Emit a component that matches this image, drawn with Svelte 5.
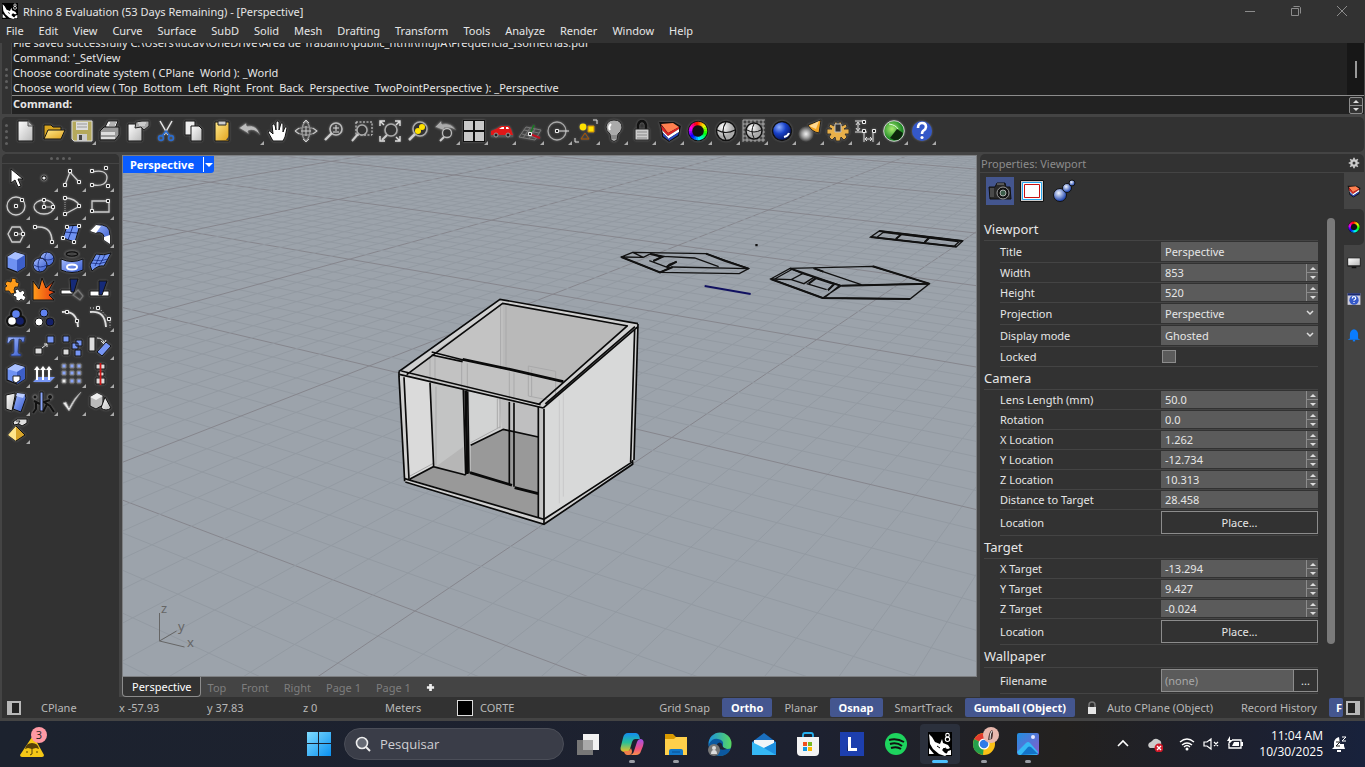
<script lang="ts">
    interface Tool {
        name: string;
        icon: string;
        more?: boolean;
    }
    interface Row {
        label: string;
        kind: string;
        value?: string;
    }
    interface Line {
        x1: number;
        y1: number;
        x2: number;
        y2: number;
        major: boolean;
    }

    const menus = ['File', 'Edit', 'View', 'Curve', 'Surface', 'SubD', 'Solid', 'Mesh', 'Drafting', 'Transform', 'Tools', 'Analyze', 'Render', 'Window', 'Help'];

    const history = [
        'File saved successfully C:\\Users\\lucav\\OneDrive\\Área de Trabalho\\public_html\\mujiA\\Frequência_Isometrias.pdf',
        "Command: '_SetView",
        'Choose coordinate system ( CPlane  World ): _World',
        'Choose world view ( Top  Bottom  Left  Right  Front  Back  Perspective  TwoPointPerspective ): _Perspective',
    ];

    // hue ring made of short arcs
    function ring(r: number, w: number) {
        let out = '';
        for (let k = 0; k < 24; k++) {
            let a = (k * Math.PI) / 12;
            let b = ((k + 1.2) * Math.PI) / 12;
            out += `<path d="M${12 + r * Math.sin(a)} ${12 - r * Math.cos(a)}A${r} ${r} 0 0 1 ${12 + r * Math.sin(b)} ${12 - r * Math.cos(b)}" fill="none" stroke="hsl(${k * 15 + 20} 100% 50%)" stroke-width="${w}"/>`;
        }
        return `<circle cx="12" cy="12" r="10.3" fill="#111"/>${out}`;
    }

    // small square control points
    function pts(...p: number[][]) {
        return p.map(([x, y]) => `<path d="M${x - 1.5} ${y - 1.5}h3v3h-3z" fill="#222" stroke="#eee"/>`).join('');
    }

    const layers = '<path d="M1 3h15l7 4-2 10-10 6-7-5-1-8z" fill="#111"/><path d="M3 5l12-1 6 4-11 6z" fill="#ff8050"/><path d="M3 6l7 8v3l-6-6zM10 14l11-6v2l-11 7z" fill="#d22"/><path d="M4 11l6 6v2l-5-5zM10 17l11-7v3l-11 7z" fill="#fff"/><path d="M5 14l5 5v2l-5-4zM10 20l11-7-1 3-9 6z" fill="#2a4ac0"/>';
    const sphere = '<circle cx="12" cy="12" r="9.5" fill="url(#gray)" stroke="#111" stroke-width="1.5"/>';
    const meridians = '<path d="M12 3q-6 9 0 18M3 11q9 5 18 0" fill="none" stroke="#111" stroke-width="1.2"/>';
    const page = '<path d="M4 2h10l5 5v15H4z" fill="url(#paper)" stroke="#111"/><path d="M14 2v5h5" fill="#bbb" stroke="#555"/>';
    const glass = '<circle cx="14" cy="10" r="6" fill="#444" stroke="#bbb" stroke-width="1.6"/><path d="M10 14l-7 7" stroke="#ccc" stroke-width="2.4"/>';

    const toolbar: Tool[] = [
        { name: 'New', icon: page },
        { name: 'Open', icon: '<path d="M2 20V6h7l2 2h8v4" fill="#d8a520" stroke="#111"/><path d="M2 20l4-9h17l-4 9z" fill="url(#gold)" stroke="#111"/>' },
        { name: 'Save', icon: '<path d="M2 2h20v20H4l-2-2z" fill="#b5a95c" stroke="#ddd"/><path d="M6 3h12v8H6z" fill="#ddd"/><path d="M7 15h10v7H7z" fill="#ccc"/><path d="M9 16h3v5H9z" fill="#444"/><path d="M7 5h10M7 8h10" stroke="#999"/>', more: true },
        { name: 'Print', icon: '<path d="M7 8l3-6h10l-3 8z" fill="#eee" stroke="#111"/><path d="M2 12l4-4h15v8l-4 5H2z" fill="#999" stroke="#111"/><path d="M3 13h14v3H3zM3 18h14v2H3z" fill="#ddd"/><path d="M12 4h6M11 6h6" stroke="#777"/>' },
        { name: 'Document properties', icon: '<path d="M2 5h14v17H2z" fill="url(#paper)" stroke="#111"/><path d="M10 3l6-1h7v5l-5 4-3-3-6 1z" fill="#aaa" stroke="#222"/><path d="M12 4l8 0M13 6h6" stroke="#eee"/>' },
        { name: 'Cut', icon: '<path d="M6 2l8 14M18 2l-8 14" stroke="#e8e8e8" stroke-width="1.5"/><circle cx="7" cy="19" r="2.4" fill="none" stroke="#2a6cd0" stroke-width="1.6"/><circle cx="17" cy="19" r="2.4" fill="none" stroke="#2a6cd0" stroke-width="1.6"/><path d="M8 17l4-5 4 5" fill="none" stroke="#2a6cd0" stroke-width="1.6"/>' },
        { name: 'Copy', icon: '<path d="M3 2h10v14H3z" fill="#eee" stroke="#111"/><path d="M9 7h8l3 3v12H9z" fill="url(#paper)" stroke="#111"/>' },
        { name: 'Paste', icon: '<path d="M5 3h14v19H5z" fill="url(#gold)" stroke="#111"/><path d="M8 2h8v4H8z" fill="#ccc" stroke="#222"/><path d="M19 17l-3 4h3z" fill="#444"/>' },
        { name: 'Undo', icon: '<path d="M1 9l7-5 1 3q10-2 13 9-6-7-12-4l1 3z" fill="#bbb" stroke="#555" stroke-width=".6"/>', more: true },
        { name: 'Pan', icon: '<path d="M7 22l-5-9q1-2 3 0l2 2L6 6q1-2 3 0l1 5V3q2-2 3 0v8l2-7q2-1 2 1v8l2-5q2-1 2 1l-2 9-2 4z" fill="#fff" stroke="#111" stroke-width="1"/>' },
        { name: 'Rotate view', icon: '<path d="M12 2q-4 3-4 10t4 10q4-4 4-10T12 2M1 12q5-4 11-4t11 4q-5 4-11 4T1 12" fill="none" stroke="#999" stroke-width="1.2"/><path d="M9 4l3-3 3 3M9 20l3 3 3-3M5 9l-4 3 4 3M19 9l4 3-4 3M12 7v10M7 12h10" fill="none" stroke="#ccc"/>' },
        { name: 'Zoom', icon: glass + '<path d="M11 9h6M14 6v6M11 13h6" stroke="#ddd"/>' },
        { name: 'Zoom window', icon: '<path d="M6 3h16v13H6z" fill="none" stroke="#ddd" stroke-dasharray="2 1.5"/><circle cx="12" cy="11" r="5" fill="#333" stroke="#aaa" stroke-width="1.5"/><path d="M8 15l-6 7" stroke="#ccc" stroke-width="2"/>' },
        { name: 'Zoom extents', icon: '<circle cx="13" cy="11" r="6" fill="#333" stroke="#aaa" stroke-width="1.6"/><path d="M9 16l-5 5" stroke="#ccc" stroke-width="2"/><path d="M2 7V2h5M17 2h5v5M2 17v5h5M22 17v5h-5M2 2l4 4M22 2l-4 4M22 22l-4-4" fill="none" stroke="#ddd" stroke-width="1.4"/>' },
        { name: 'Zoom selected', icon: '<circle cx="14" cy="10" r="7" fill="#333" stroke="#aaa" stroke-width="1.6"/><path d="M9 15l-6 6" stroke="#ccc" stroke-width="2.5"/><circle cx="12" cy="12" r="3" fill="#ffe100"/><circle cx="16" cy="8" r="3" fill="#ffe100"/>' },
        { name: 'Undo view', icon: '<path d="M1 8l6-6 1 3q9-2 14 6-6-3-12-2l1 3z" fill="#aaa" stroke="#555" stroke-width=".6"/><circle cx="13" cy="14" r="4.5" fill="#333" stroke="#bbb" stroke-width="1.3"/><path d="M10 18l-4 4" stroke="#ccc" stroke-width="2"/>', more: true },
        { name: 'Four views', icon: '<path d="M1 1h22v22H1z" fill="#111"/><path d="M2 2h9v9H2zM13 2h9v9h-9zM2 13h9v9H2zM13 13h9v9h-9z" fill="#c8c8c8"/>', more: true },
        { name: 'Named views', icon: '<path d="M1 17h22" stroke="#555" stroke-width="2"/><path d="M1 16v-4l5-2 5-3h8l2 3 2 6z" fill="#e01818"/><path d="M9 10l3-2h2v2zM16 8h2l1 2h-3z" fill="#fff"/><circle cx="6" cy="16" r="2" fill="#222" stroke="#999"/><circle cx="18" cy="16" r="2" fill="#222" stroke="#999"/>', more: true },
        { name: 'Set CPlane', icon: '<path d="M1 18l7-10 15 3-6 10zM4 15l15 4M6 11l15 3M5 19l7-10M11 20l6-10" fill="none" stroke="#777"/><path d="M12 15l10 4" stroke="#c01020" stroke-width="2"/><path d="M12 15l4-9" stroke="#167a20" stroke-width="1.6"/>' + pts([12, 15]), more: true },
        { name: 'Object snap', icon: '<circle cx="11" cy="12" r="9" fill="none" stroke="#aaa" stroke-width="1.3"/><path d="M12 12h11" stroke="#ddd"/>' + pts([11, 12]), more: true },
        { name: 'Select', icon: '<circle cx="9" cy="8" r="3.4" fill="#ffe100"/><path d="M14 7h6v6h-6z" fill="#ffe100" stroke="#c80"/><path d="M11 14l4 6H7z" fill="none" stroke="#a50"/><path d="M19 1h4v4M1 19v4h4" fill="none" stroke="#ddd"/>', more: true },
        { name: 'Hide', icon: '<path d="M12 1q8 0 8 8-1 4-4 6l-1 6q-3 3-6 0l-1-6q-4-3-4-7 1-7 8-7z" fill="#aaa" stroke="#222"/><path d="M9 5q-3 3-1 6" stroke="#fff" fill="none" stroke-width="2"/><path d="M9 17h6M9 19h6" stroke="#666"/>', more: true },
        { name: 'Lock', icon: '<path d="M8 11V6q1-4 4-4t4 4v5" fill="none" stroke="#111" stroke-width="2.5"/><path d="M5 10h14v11H5z" fill="#ccc" stroke="#222"/><path d="M7 13h10M7 16h10M7 19h10" stroke="#888"/>', more: true },
        { name: 'Layers', icon: layers, more: true },
        { name: 'Object properties', icon: ring(7.5, 3.4), more: true },
        { name: 'Shade', icon: sphere + meridians, more: true },
        { name: 'Wireframe', icon: '<path d="M1 1v22M5 1v22M9 1v22M13 1v22M17 1v22M21 1v22M1 1h22M1 5h22M1 9h22M1 13h22M1 17h22M1 21h22" stroke="#bbb" stroke-width=".8"/>' + sphere.replace('9.5', '8') + '<path d="M12 5q-4 7 0 14M5 11q7 4 14 0" fill="none" stroke="#111"/>', more: true },
        { name: 'Render', icon: '<circle cx="12" cy="12" r="9.5" fill="url(#ball)" stroke="#111" stroke-width="1.4"/><path d="M14 18q4-1 5-4" stroke="#fff" fill="none" stroke-width="2"/>', more: true },
        { name: 'Lights', icon: '<ellipse cx="8" cy="15" rx="8" ry="8" fill="url(#glow)"/><path d="M10 6l13-5-2 13q-7-1-11-8z" fill="#f5a623" stroke="#222"/><path d="M11 7l10-5-3 8z" fill="#ffd890"/>', more: true },
        { name: 'Options', icon: '<path d="M9 3h2v4h2V3h2l1 4 4-2 1 3-3 2h5v5h-4l2 3-3 3-3-3-1 4h-4l-1-4-3 3-3-3 2-3H1v-5h5L3 8l1-3 4 2z" fill="#e8b04a" stroke="#222" stroke-width=".8"/><path d="M9 5h6v8H9z" fill="#333" stroke="#bbb"/>', more: true },
        { name: 'Dimension', icon: '<path d="M1 2h9M1 13h12M4 4v7M10 14v9M19 14v9M11 20h7" stroke="#ddd" fill="none"/><path d="M2 6l2-3 2 3M2 9l2 3 2-3M13 18l-2 2 2 2M16 18l2 2-2 2" fill="none" stroke="#ddd"/>' + pts([10, 3], [10, 12], [20, 12]), more: true },
        { name: 'Grasshopper', icon: '<circle cx="12" cy="12" r="10.3" fill="url(#green)" stroke="#ccc"/><path d="M8 19l7-9 6 4q-2 8-9 7z" fill="#0c250c"/><path d="M7 5q7 1 9 5" stroke="#dfd" fill="none"/>', more: true },
        { name: 'Help', icon: '<circle cx="12" cy="12" r="10" fill="#3458c8"/><path d="M8 9q0-5 4-5t4 4q0 2-3 4-1 1-1 3" stroke="#fff" stroke-width="2.6" fill="none"/><circle cx="12" cy="18.500" r="1.600" fill="#fff"/>', more: true },
    ];

    const cube = '<path d="M3 7l8-5 10 3v12l-8 5-10-4z" fill="#6f92f2" stroke="#111" stroke-width="1.2"/><path d="M3 7l8-5 10 3-8 5z" fill="#a9c0ff"/><path d="M13 10l8-5v12l-8 5z" fill="#3d5fc8"/>';

    const sideTools: Tool[] = [
        { name: 'Pointer', icon: '<path d="M7 3v14l4-3 3 7 3-1-3-7h5z" fill="#fff" stroke="#111"/>' },
        { name: 'Point', icon: '<circle cx="12" cy="12" r="3" fill="#111" stroke="#666"/><circle cx="12" cy="12" r="1.600" fill="#eee"/>', more: true },
        { name: 'Polyline', icon: '<path d="M5 19l5-13 9 10" stroke="#ccc" fill="none" stroke-width="1.3"/>' + pts([5, 19], [10, 5], [19, 16]), more: true },
        { name: 'Curve', icon: '<path d="M4 6q14-3 15 5 0 10-14 8" stroke="#ccc" fill="none" stroke-width="1.3"/>' + pts([4, 5], [18, 2], [20, 20], [4, 19]), more: true },
        { name: 'Circle', icon: '<circle cx="12" cy="12" r="9" stroke="#ccc" fill="none" stroke-width="1.3"/>' + pts([12, 12], [18, 6]), more: true },
        { name: 'Ellipse', icon: '<ellipse cx="12" cy="13" rx="10" ry="7" stroke="#ccc" fill="none" stroke-width="1.3"/><path d="M12 6v7h9" stroke="#ccc" fill="none"/>' + pts([12, 6], [12, 13], [21, 13]), more: true },
        { name: 'Arc', icon: '<path d="M5 4q10 0 15 8L5 20" stroke="#ccc" fill="none" stroke-width="1.3"/><path d="M5 4v16" stroke="#999" stroke-dasharray="1 1"/>' + pts([5, 4], [19, 12], [5, 20]), more: true },
        { name: 'Rectangle', icon: '<path d="M4 7h17v11H4z" stroke="#ccc" fill="none" stroke-width="1.3"/>' + pts([20, 7], [4, 17]), more: true },
        { name: 'Polygon', icon: '<path d="M8 5h8l4 7-4 8H8l-4-8z" stroke="#ccc" fill="none" stroke-width="1.3"/><path d="M12 12h7" stroke="#ccc"/>' + pts([12, 12], [19, 12]), more: true },
        { name: 'Fillet', icon: '<path d="M3 5h4q13 0 13 15" stroke="#ccc" fill="none" stroke-width="1.6"/>' + pts([3, 5], [20, 20]), more: true },
        { name: 'Surface from points', icon: '<path d="M7 4l13-1-5 17-12-4z" fill="#6f92f2" stroke="#111"/><path d="M13 4l-5 14M5 10l12 1" stroke="#1a2f80"/>' + pts([7, 5], [19, 4], [3, 16], [14, 20]), more: true },
        { name: 'Loft', icon: '<path d="M2 9l6-6q14-2 14 10v9l-6-4q1-9-8-7z" fill="url(#blue)" stroke="#111"/><path d="M2 9l6-6 5 1-5 7zM16 15l6-2v9l-6-4z" fill="#fff"/>', more: true },
        { name: 'Box', icon: cube, more: true },
        { name: 'Boolean union', icon: '<circle cx="15" cy="9" r="7" fill="url(#blue)" stroke="#111"/><circle cx="8" cy="15" r="7" fill="url(#blue)" stroke="#111"/><path d="M8 8q-4 7 0 14M2 15q6 4 13 0M15 2q-3 4-2 9M10 8q6 4 12 0" fill="none" stroke="#14287a" stroke-width=".8"/>', more: true },
        { name: 'Revolve', icon: '<ellipse cx="12" cy="4" rx="6" ry="2.500" fill="none" stroke="#111" stroke-width="2"/><ellipse cx="12" cy="4" rx="7" ry="3.300" fill="none" stroke="#777" stroke-width=".6"/><path d="M1 9q11 5 22 0v11q-11 5-22 0z" fill="url(#blue)" stroke="#111"/><ellipse cx="12" cy="17" rx="5" ry="2.500" fill="none" stroke="#fff" stroke-width="2"/>', more: true },
        { name: 'Patch', icon: '<path d="M2 15l6-11q8 2 15-1l-7 13q-6-1-12 5z" fill="#6f92f2" stroke="#111"/><path d="M12 5L7 16M17 5l-6 11M5 10q8 2 15-1M3 13q8 2 15-1" stroke="#14287a" fill="none" stroke-width=".8"/>', more: true },
        { name: 'Explode puzzle', icon: '<path d="M1 6l2-3 4 1 1-4 4 1 0 3 3 1-1 4-3 0-1 3 1 3-4 1-2-3-4 0 0-4 2-1z" fill="#ff9c1a" stroke="#111" stroke-width=".8"/><path d="M11 12l3-1 2 3 3-2 2 3-2 2 3 2-2 4-3-2-2 2-3-1 0-3-3-1 1-3 2 0z" fill="#fff" stroke="#111" stroke-width=".8"/>', more: true },
        { name: 'Explode', icon: '<path d="M1 3l6 8 3-11 4 10 8-7-5 9 6 2-6 3 5 5H1z" fill="url(#fire)" stroke="#111"/>' },
        { name: 'Trim', icon: '<path d="M1 12h12v4H1z" fill="#fff" stroke="#111"/><path d="M10 1h8l-4 13h-3z" fill="#152a78" stroke="#111"/><path d="M13 17l5-5 5 6-3 4z" fill="none" stroke="#777" stroke-width="1.2"/>' },
        { name: 'Split', icon: '<path d="M2 13h19v5H2z" fill="#fff" stroke="#111"/><path d="M11 3h8l-5 14h-3z" fill="#152a78" stroke="#111"/>' },
        { name: 'Group', icon: '<circle cx="12" cy="8" r="6" fill="#111"/><circle cx="8" cy="15" r="6" fill="#111"/><circle cx="16" cy="15" r="6" fill="#111"/><circle cx="12" cy="8" r="3.800" fill="#5f82f0"/><circle cx="8" cy="15" r="3.800" fill="#fff"/><circle cx="16" cy="15" r="3.800" fill="#142068"/>', more: true },
        { name: 'Ungroup', icon: '<circle cx="12" cy="7" r="4" fill="#5f82f0" stroke="#111"/><circle cx="7" cy="16" r="4" fill="#fff" stroke="#111"/><circle cx="18" cy="16" r="4" fill="#142068" stroke="#111"/>' },
        { name: 'Edit points', icon: '<path d="M2 6q15-2 16 15" stroke="#ddd" fill="none" stroke-width="1.800"/>' + pts([7, 6], [17, 15]) },
        { name: 'Control points', icon: '<path d="M2 6q15-2 16 15" stroke="#ddd" fill="none" stroke-width="1.800"/><path d="M2 2h9l11 12v8" stroke="#ddd" fill="none" stroke-dasharray="1 2"/>' + pts([10, 2], [21, 13]), more: true },
        { name: 'Text', icon: '<path d="M4 3h17l-1 5h-2q0-3-3-3l-1 13q0 2 3 2v2H7v-2q3 0 3-2V5Q6 5 5 9H3z" fill="url(#blue)" stroke="#1a2c66" stroke-width=".7"/>' },
        { name: 'Move', icon: '<path d="M3 14h7v6H3z" fill="#ddd" stroke="#111"/><path d="M15 2h7v7h-7z" fill="#7796f4" stroke="#111"/><path d="M10 14l5-4M12 10h3v3" stroke="#ddd" fill="none"/>', more: true },
        { name: 'Copy object', icon: '<path d="M3 2h6v6H3zM16 6h6v6h-6zM12 9h6v6h-6zM15 16h6v6h-6z" fill="#7796f4" stroke="#111"/><path d="M3 15h6v6H3z" fill="#ddd" stroke="#111"/>' },
        { name: 'Rotate', icon: '<path d="M1 3h6v14H1z" fill="#ddd" stroke="#111"/><path d="M9 4q6 0 7 5M13 7l3 3 2-4" fill="none" stroke="#ddd"/><path d="M9 18l9-10 5 4-9 10z" fill="#7796f4" stroke="#111"/>', more: true },
        { name: 'Solid tools', icon: cube + '<path d="M9 14h7v4l-4 3-3-2z" fill="#fff" stroke="#222"/>', more: true },
        { name: 'Extrude', icon: '<path d="M1 20l5-5h17l-5 5z" fill="#7796f4"/><path d="M5 18V6M11 18V6M17 18V6" stroke="#fff" stroke-width="2"/><path d="M2 8l3-4 3 4zM8 8l3-4 3 4zM14 8l3-4 3 4z" fill="#fff"/>', more: true },
        { name: 'Array', icon: '<path d="M2 2h4v4H2zM10 2h4v4h-4zM17 2h4v4h-4zM2 9h4v4H2zM10 9h4v4h-4zM17 9h4v4h-4zM10 17h4v4h-4zM17 17h4v4h-4z" fill="#8ba5f8" stroke="#777"/><path d="M2 17h4v4H2z" fill="#eee" stroke="#777"/>', more: true },
        { name: 'Align', icon: '<path d="M8 2h9v5H8zM10 10h6v4h-6zM8 16h9v6H8z" fill="#ddd" stroke="#111"/><path d="M12.500 1v22" stroke="#d01818" stroke-width="1.800"/>', more: true },
        { name: 'Bend', icon: '<path d="M2 5l9-2v3l-3 15-6-2z" fill="url(#paper)" stroke="#111"/><path d="M13 3l8 1 1 4-5 14-8-3z" fill="url(#blue)" stroke="#111"/><path d="M13 3l8 1-2 4-7-2z" fill="#bccdff"/>', more: true },
        { name: 'Mirror', icon: '<circle cx="3" cy="7" r="2" fill="#111" stroke="#666"/><circle cx="18" cy="7" r="2.500" fill="#111" stroke="#666"/><path d="M2 11l6 3M4 12v7l-3 4M18 10l-6 2 6 4 4 6M15 14l-4 8" stroke="#111" stroke-width="2" fill="none"/><path d="M8 2h3v19H8z" fill="#8ba5f8" stroke="#111"/>', more: true },
        { name: 'Check', icon: '<path d="M3 13l3-1 3 6q5-10 12-16Q14 11 9 21z" fill="#eee" stroke="#999" stroke-width=".7"/>', more: true },
        { name: 'Mesh', icon: '<path d="M2 7l7-4 6 3v9l-7 4-6-3z" fill="#bbb" stroke="#111"/><path d="M2 7l7-4 6 3-7 4z" fill="#eee"/><path d="M17 7l6 11q-5 4-10 0z" fill="url(#paper)" stroke="#111"/>', more: true },
        { name: 'Render tools', icon: '<path d="M12 8l-8 9 8 6 9-6z" fill="#d8a52a" stroke="#111"/><path d="M12 8l-8 9 8 6z" fill="#ffe58a"/><path d="M9 4l4-3h10v4l-5 3-3-2-5 1z" fill="#ddd" stroke="#111"/><path d="M12 3h4l-2 3" stroke="#222" fill="none"/>', more: true },
    ];

    // ground grid: origin plus the two vanishing points, in scene units
    const origin = { x: 415, y: 611 };
    const vanishX = { x: 1337, y: -12 };
    const vanishY = { x: -1228, y: -12 };

    function project(i: number, j: number) {
        let a = 0.386 * i;
        let b = 0.2625 * j;
        let w = 1 + a + b;
        return {
            x: (origin.x + a * vanishX.x + b * vanishY.x) / w,
            y: (origin.y + a * vanishX.y + b * vanishY.y) / w,
        };
    }

    // ten minor cells per major one
    function buildGrid() {
        let lines: Line[] = [];
        for (let k = -11; k <= 110; k++) {
            let ends = [[project(-0.8, k / 10), project(12, k / 10)]];
            if (k > -8 && k < 80) ends.push([project(k / 10, -1.2), project(k / 10, 14)]);
            for (const [p, q] of ends) lines.push({ x1: p.x, y1: p.y, x2: q.x, y2: q.y, major: k % 10 == 0 });
        }
        return lines;
    }

    const grid = buildGrid();

    const sections: { title: string; rows: Row[] }[] = [
        {
            title: 'Viewport',
            rows: [
                { label: 'Title', kind: 'text', value: 'Perspective' },
                { label: 'Width', kind: 'number', value: '853' },
                { label: 'Height', kind: 'number', value: '520' },
                { label: 'Projection', kind: 'select', value: 'Perspective' },
                { label: 'Display mode', kind: 'select', value: 'Ghosted' },
                { label: 'Locked', kind: 'check' },
            ],
        },
        {
            title: 'Camera',
            rows: [
                { label: 'Lens Length (mm)', kind: 'number', value: '50.0' },
                { label: 'Rotation', kind: 'number', value: '0.0' },
                { label: 'X Location', kind: 'number', value: '1.262' },
                { label: 'Y Location', kind: 'number', value: '-12.734' },
                { label: 'Z Location', kind: 'number', value: '10.313' },
                { label: 'Distance to Target', kind: 'plain', value: '28.458' },
                { label: 'Location', kind: 'button', value: 'Place...' },
            ],
        },
        {
            title: 'Target',
            rows: [
                { label: 'X Target', kind: 'number', value: '-13.294' },
                { label: 'Y Target', kind: 'number', value: '9.427' },
                { label: 'Z Target', kind: 'number', value: '-0.024' },
                { label: 'Location', kind: 'button', value: 'Place...' },
            ],
        },
        { title: 'Wallpaper', rows: [{ label: 'Filename', kind: 'file', value: '(none)' }] },
    ];

    const rhino = '<path d="M0 0h24v24H0z" fill="#000"/><path d="M1 2l3 3 3 5 5 2 2-5 1 4 5 2 2 3-2 1-4-1-2 2 3 3 3 1-3 2-6-2-6-5-3-5zM1 16l5 6H1zM20 19l3-1v5h-5z" fill="#fff"/><path d="M9 14l3 2M15 17l3-1" stroke="#000"/>';
    const eight = '<circle cx="19.500" cy="3.200" r="1.800" fill="none" stroke="#fff" stroke-width="1.100"/><circle cx="19.500" cy="7.300" r="2.200" fill="none" stroke="#fff" stroke-width="1.100"/>';
    const monitor = '<path d="M1 3h22v15H1z" fill="#111"/><path d="M2 4h20v12H2z" fill="url(#paper)"/><path d="M8 18h8v3H8z" fill="#111"/>';
    const helpBox = '<path d="M1 2h22v20H1z" fill="#ccd" /><path d="M1 2h22v4H1z" fill="#1b2a70"/><circle cx="12" cy="14" r="8" fill="#3458c8"/><path d="M9 11q0-3 3-3t3 3q0 1-3 3v1M12 17v2" stroke="#fff" stroke-width="2" fill="none"/>';
    const bell = '<path d="M12 2q6 1 7 8v8l4 2H1l4-2v-8q1-7 7-8z" fill="#0a7cff"/><path d="M10 20h4v3h-4z" fill="#0a7cff"/>';
    const panelTabs: Tool[] = [
        { name: 'Layers panel', icon: layers },
        { name: 'Properties panel', icon: ring(7.5, 4) },
        { name: 'Display panel', icon: monitor },
        { name: 'Help panel', icon: helpBox },
        { name: 'Notifications panel', icon: bell },
    ];

    const propertyPages: Tool[] = [
        { name: 'Camera', icon: '<path d="M1 8h6l2-4h8l1 4h4l1 12H2z" fill="#292929" stroke="#111"/><path d="M9 5h7M3 10v8" stroke="#888"/><path d="M2 9h4v9H2z" fill="#4a4a4a"/><circle cx="15" cy="14" r="6" fill="#111" stroke="#999"/><circle cx="15" cy="14" r="3" fill="#3b5c48" stroke="#ccc" stroke-width=".8"/>' },
        { name: 'Frame', icon: '<path d="M.5 1.500h23v21H.5z" fill="#ccc" stroke="#111"/><path d="M2.500 3.500h19v17h-19z" fill="#fff" stroke="#26a8f0"/><path d="M4.500 5.500h15v13h-15z" fill="#fff" stroke="#c81010"/>' },
        { name: 'Material', icon: '<circle cx="8" cy="16" r="6.500" fill="url(#ball2)" stroke="#111"/><circle cx="15" cy="9" r="4.500" fill="url(#ball2)" stroke="#111"/><circle cx="20" cy="4" r="3" fill="url(#ball2)" stroke="#111"/>' },
    ];

    const toggles = [
        { label: 'Grid Snap', on: false },
        { label: 'Ortho', on: true },
        { label: 'Planar', on: false },
        { label: 'Osnap', on: true },
        { label: 'SmartTrack', on: false },
        { label: 'Gumball (Object)', on: true },
    ];

    const apps = [
        { name: 'Task view', state: '', icon: '<path d="M7 2h16v16H7z" fill="#f2f2f2"/><path d="M1 8h16v15H1z" fill="#777"/><path d="M7 8h10v10H7z" fill="#aaa"/>' },
        { name: 'Copilot', state: 'open', icon: '<path d="M8 1h8q3 0 4 6h-5q-2 0-3 3l-2 7q-1 3-4 3H4q-5-1-3-6l2-8q1-5 5-5z" fill="url(#cop1)"/><path d="M16 23H9q4 0 5-4l3-9q1-3 4-3 4 1 2 7l-2 5q-1 4-5 4z" fill="url(#cop2)"/><path d="M7 23q-3-1-3-4h4q2 0 3-3l1 3q0 4-3 4z" fill="#f0804a"/>' },
        { name: 'File Explorer', state: 'open', icon: '<path d="M1 2h8l3 3h11v6H1z" fill="#d99a00"/><path d="M1 7h9l2-2h11v18H1z" fill="#ffd04a"/><path d="M5 23v-4q0-2 2-2h10q2 0 2 2v4z" fill="#1177c8"/><path d="M8 20h8" stroke="#0a4f90"/>' },
        { name: 'Edge', state: '', icon: '<circle cx="12" cy="12" r="11.500" fill="url(#edge)"/><path d="M1 12q3-6 9-5 6 1 5 6-1 4 4 4 3 0 4-1-3 8-11 8-8-1-11-7z" fill="#0b58a0"/><path d="M9 12q3-3 5 0 0 4 5 5-6 2-9-1z" fill="#1d2333"/><circle cx="6" cy="18" r="6" fill="#777"/><circle cx="6" cy="16" r="2" fill="#ddd"/><path d="M3 22q0-4 3-4t3 4z" fill="#ddd"/>' },
        { name: 'Mail', state: '', icon: '<path d="M0 10L12 1l12 9v13H0z" fill="#1a6fc0"/><path d="M2 8h20v8H2z" fill="#f2f5f8"/><path d="M0 10l12 6 12-6v13H0z" fill="#35b8f5"/><path d="M24 10v13L12 16z" fill="#1d8fe0"/>' },
        { name: 'Store', state: '', icon: '<path d="M7 6V3q0-2 2-2h6q2 0 2 2v3" fill="none" stroke="#25b0ef" stroke-width="1.800"/><path d="M1 5h22v15q0 4-4 4H5q-4 0-4-4z" fill="#f3f3f3"/><path d="M7 10h4v4H7z" fill="#f05020"/><path d="M12 10h4v4h-4z" fill="#78b820"/><path d="M7 15h4v4H7z" fill="#1296e0"/><path d="M12 15h4v4h-4z" fill="#fbb800"/>' },
        { name: 'L', state: '', icon: '<path d="M0 0h24v24H0z" fill="#1d3fae"/><path d="M7 19l2-14v11h8v3z" fill="#102050"/><path d="M8 5h3v11h6v3H8z" fill="#fff"/>' },
        { name: 'Spotify', state: '', icon: '<circle cx="12" cy="12" r="11" fill="#1ed45e"/><path d="M5 8q8-2 15 2M6 12q7-2 12 2M7 16q6-2 10 1" stroke="#111" stroke-width="2" fill="none"/>' },
        { name: 'Rhino', state: 'current', icon: rhino + eight },
        { name: 'Chrome', state: 'open', icon: '<circle cx="12" cy="12" r="11" fill="#fbc116"/><path d="M12 12L2 7Q6 1 12 1t10 6z" fill="#e33b2e"/><path d="M12 12l-1 11Q-2 20 2 7z" fill="#25a04b"/><circle cx="12" cy="12" r="5.500" fill="#fff"/><circle cx="12" cy="12" r="4.300" fill="#2f7be8"/><circle cx="19" cy="3" r="8" fill="#e8b8ae"/><path d="M16 8q1-9 4-10 2 2 0 9z" fill="#4a3434"/><path d="M18 7q0-6 2-8" stroke="#eee" fill="none"/>' },
        { name: 'Photos', state: 'open', icon: '<path d="M3 1h18q2 0 2 2v18q0 2-2 2H3q-2 0-2-2V3q0-2 2-2z" fill="url(#photo)"/><path d="M1 20l9-9q2-2 4 0l8 9-1 3H3z" fill="#35b9f5"/><path d="M5 23l7-8q1-1 3 0l7 7z" fill="#1473c8"/><circle cx="17" cy="5" r="2" fill="#e8e8ff"/>' },
    ];
</script>

<svg class="defs" aria-hidden="true">
    <defs>
        <linearGradient id="paper" x2="1" y2="1"><stop stop-color="#fff" /><stop offset="1" stop-color="#b8b8b8" /></linearGradient>
        <linearGradient id="gold" x2="1" y2="1"><stop stop-color="#ffe98c" /><stop offset="1" stop-color="#e0a21c" /></linearGradient>
        <linearGradient id="blue" x2="1" y2="1"><stop stop-color="#a5bcff" /><stop offset="1" stop-color="#3358cc" /></linearGradient>
        <linearGradient id="fire" x2="1" y2="0"><stop stop-color="#ff9c1a" /><stop offset="1" stop-color="#e83a10" /></linearGradient>
        <radialGradient id="gray" cx=".35" cy=".3"><stop stop-color="#fff" /><stop offset="1" stop-color="#aaa" /></radialGradient>
        <radialGradient id="ball" cx=".35" cy=".3" r=".7"><stop stop-color="#8fb0ff" /><stop offset=".5" stop-color="#1740c8" /><stop offset="1" stop-color="#081760" /></radialGradient>
        <radialGradient id="ball2" cx=".4" cy=".35" r=".6"><stop stop-color="#f0f5ff" /><stop offset="1" stop-color="#2348b0" /></radialGradient>
        <radialGradient id="green" cx=".4" cy=".4"><stop stop-color="#a8ec70" /><stop offset="1" stop-color="#1f8a26" /></radialGradient>
        <radialGradient id="glow"><stop stop-color="#eee" /><stop offset="1" stop-color="#eee" stop-opacity="0" /></radialGradient>
        <linearGradient id="cop1" y2="1" x2="0"><stop stop-color="#128cf0" /><stop offset=".5" stop-color="#28c098" /><stop offset="1" stop-color="#f0c020" /></linearGradient>
        <linearGradient id="cop2" y2="1" x2="0"><stop stop-color="#a050e8" /><stop offset=".6" stop-color="#f05080" /><stop offset="1" stop-color="#f8904a" /></linearGradient>
        <linearGradient id="edge" x2="1" y2="0"><stop stop-color="#1b90e0" /><stop offset="1" stop-color="#58d860" /></linearGradient>
        <linearGradient id="photo" x2="1" y2="1"><stop stop-color="#1f8fe0" /><stop offset="1" stop-color="#8a5acb" /></linearGradient>
        <linearGradient id="win" x2="1" y2="1"><stop stop-color="#80dcff" /><stop offset="1" stop-color="#0a90f0" /></linearGradient>
    </defs>
</svg>

<div class="desktop">
    <header class="titlebar">
        <svg class="logo" viewBox="0 0 24 24">{@html rhino + eight}</svg>
        <h1>Rhino 8 Evaluation (53 Days Remaining) - [Perspective]</h1>
        <div class="window-buttons">
            <button aria-label="Minimize"><svg viewBox="0 0 12 12"><path d="M1 6.500h10" /></svg></button>
            <button aria-label="Restore"><svg viewBox="0 0 12 12"><path d="M1.500 3.500h7v7h-7zM3.500 1.500h6l1 1v6" /></svg></button>
            <button aria-label="Close"><svg viewBox="0 0 12 12"><path d="M1 1l10 10M11 1L1 11" /></svg></button>
        </div>
    </header>

    <nav class="menu">
        {#each menus as item}
            <button>{item}</button>
        {/each}
    </nav>

    <section class="command">
        <div class="grip"><i></i><i></i><i></i><i></i></div>
        <div class="command-body">
            <div class="history">
                <div class="lines">
                    {#each history as line}
                        <p>{line}</p>
                    {/each}
                </div>
                <div class="history-scroll"><i></i></div>
            </div>
            <div class="prompt">
                <label for="prompt">Command:</label>
                <input id="prompt" type="text" />
                <div class="stepper framed">
                    <button aria-label="Previous command"><i class="up"></i></button>
                    <button aria-label="Next command"><i class="down"></i></button>
                </div>
            </div>
        </div>
    </section>

    <section class="toolbar">
        <div class="grip"><i></i><i></i><i></i><i></i></div>
        <div class="tools">
            {#each toolbar as tool}
                <button class="tool" class:more={tool.more} aria-label={tool.name}>
                    <svg viewBox="0 0 24 24">{@html tool.icon}</svg>
                </button>
            {/each}
        </div>
    </section>

    <main>
        <aside class="side">
            <div class="grip flat"><i></i><i></i><i></i><i></i></div>
            <div class="side-tools">
                {#each sideTools as tool}
                    <button class="tool" class:more={tool.more} aria-label={tool.name}>
                        <svg viewBox="0 0 24 24">{@html tool.icon}</svg>
                    </button>
                {/each}
            </div>
        </aside>

        <section class="center">
            <div class="viewport">
                <svg class="scene" viewBox="123 156 853 520" preserveAspectRatio="xMinYMin slice">
                    {#each grid as l}
                        <line x1={l.x1} y1={l.y1} x2={l.x2} y2={l.y2} class:major={l.major} />
                    {/each}

                    <!-- house -->
                    <g transform="translate(380 280) scale(0.3333)" class="house">
                        <path d="M58 278L362 58 774 130 762 545 492 733 76 606z" fill="#d0d0d0" />
                        <path d="M74 290L150 305 160 560 88 597z" fill="#dadada" />
                        <path d="M150 305L268 330 272 578 160 560z" fill="#c3c4c4" />
                        <path d="M268 335L356 354V452L272 500z" fill="#d2d3d3" />
                        <path d="M356 354L475 378V474L366 450z" fill="#bfbfc0" />
                        <path d="M90 598L160 560 257 585 272 578V496L370 448 475 470V712z" fill="#999" />
                        <path d="M165 562L250 500V583z" fill="#b6b6b6" />
                        <path d="M368 72L742 138 550 303 160 217z" fill="#b9b9b9" />
                        <path d="M368 72V262L160 217z" fill="#c3c3c3" />
                        <path d="M155 222L545 308 476 374 80 284z" fill="#c2c2c2" />
                        <path d="M492 388L764 150 754 545 492 716z" fill="#d8d9d9" />
                        <path d="M476 378h16v338l-16-4z" fill="#c4c4c4" />
                        <g class="ghost">
                            <path d="M362 78v190M378 78v190M352 355v90M360 355v90M150 230v75M165 230v80M245 248v80M262 250v80M388 275v90M402 278v90" />
                            <path d="M445 258l82 16v70M445 258v90l60 12M455 268v80M168 320v235M90 588l70-38M272 488l90-48" />
                            <path d="M550 340v310M538 360v310M405 350v100" class="faint" />
                        </g>
                        <path d="M56 275L360 58 774 131M80 284L368 70 744 138M58 283L490 384M64 273L482 374M490 384L774 140M478 372L742 138M496 372L765 140" />
                        <path d="M57 275V290L74 604M72 292L87 598M774 132L762 540M764 150L752 546M475 378V712M492 386V733" />
                        <path d="M74 596L492 718 758 545M76 606L492 733 758 553V540M90 597L160 560 257 585M272 496L370 448 475 471M150 308L161 560" />
                        <path d="M155 216L250 240M155 225L248 245M250 330L257 585M263 334L267 580M388 366V612M402 368V620" />
                        <path d="M248 238L390 268 550 305M257 332L262 582M270 578L396 616M404 623L475 641" class="thick" />
                    </g>

                    <!-- flat drawings on the ground -->
                    <g transform="translate(600 215) scale(0.3333)" class="plans">
                        <path d="M64 126L98 112 318 116 446 161 418 176 180 172zM98 112L130 127 64 126M130 127L152 116 190 124 284 129 356 155M148 137L210 160M180 172L218 156 446 161M152 116L190 124 160 138M200 156L208 148 230 140" />
                        <path d="M318 116L376 138 446 161M64 126L180 172 218 156M150 116L186 126 160 138M200 156L230 140" class="thick" />
                        <path d="M512 192L570 160 818 154 988 206 930 252 668 249zM512 192L574 194 608 176 570 160M574 194L612 206 640 188M608 176L724 212 988 206M640 160L784 209M620 206L680 224M640 188L702 208 684 226M668 249L724 212M676 246L716 214M524 192L578 162" />
                        <path d="M512 192L668 249 930 252M818 154L988 206 724 212M570 160L720 212M626 206L650 188M684 226L702 208M644 160L670 170" class="thick" />
                        <path d="M812 66L838 48 1088 78 1070 95zM832 66L850 52 1074 80M888 72L904 58M974 82L988 68M1064 92L1080 78" />
                        <path d="M812 66L1070 95M888 72L904 58M974 82L988 68M838 48L1088 78" class="thick" />
                        <path d="M466 89h5v3h-5" />
                        <path d="M314 213L452 237" class="navy" />
                    </g>

                    <g class="axes">
                        <path d="M159.500 613v28l17-10M159.500 641l25 6" />
                        <text x="161" y="613">z</text>
                        <text x="178" y="631">y</text>
                        <text x="187" y="647">x</text>
                    </g>
                </svg>
                <button class="view-label"><span>Perspective</span><b><i class="down"></i></b></button>
            </div>
            <div class="tabs">
                <button class="current">Perspective</button>
                <button>Top</button>
                <button>Front</button>
                <button>Right</button>
                <button>Page 1</button>
                <button>Page 1</button>
                <button class="add" aria-label="New page"><svg viewBox="0 0 10 10"><path d="M5 1v8M1 5h8" stroke="#eee" stroke-width="3" /></svg></button>
            </div>
        </section>

        <aside class="properties">
            <div class="panel-title">
                <h2>Properties: Viewport</h2>
                <button aria-label="Panel options">
                    <svg viewBox="0 0 16 16"><circle cx="8" cy="8" r="3.500" fill="none" stroke="#ccc" stroke-width="3" /><path d="M8 1v3M8 12v3M1 8h3M12 8h3M3 3l2 2M11 11l2 2M13 3l-2 2M5 11l-2 2" stroke="#ccc" stroke-width="2.200" /></svg>
                </button>
            </div>
            <div class="panel-body">
                <div class="panel-main">
                    <div class="pages">
                        {#each propertyPages as p, i}
                            <button class:current={i == 0} aria-label={p.name}><svg viewBox="0 0 24 24">{@html p.icon}</svg></button>
                        {/each}
                    </div>
                    <div class="scroll-area">
                        <div class="form">
                            {#each sections as section, s}
                                <h3>{section.title}</h3>
                                {#each section.rows as row, r}
                                    <div class="row {row.kind}">
                                        <label for="f{s}-{r}">{row.label}</label>
                                        {#if row.kind == 'select'}
                                            <div class="field">
                                                <select id="f{s}-{r}"><option>{row.value}</option></select>
                                                <svg class="chevron" viewBox="0 0 8 8"><path d="M1 2l3 3 3-3" /></svg>
                                            </div>
                                        {:else if row.kind == 'check'}
                                            <input id="f{s}-{r}" type="checkbox" />
                                        {:else if row.kind == 'button'}
                                            <button id="f{s}-{r}" class="outlined">{row.value}</button>
                                        {:else if row.kind == 'file'}
                                            <div class="field">
                                                <input id="f{s}-{r}" type="text" placeholder={row.value} />
                                                <button class="outlined browse" aria-label="Browse">...</button>
                                            </div>
                                        {:else}
                                            <div class="field">
                                                <input id="f{s}-{r}" type="text" value={row.value} />
                                                {#if row.kind == 'number'}
                                                    <div class="stepper">
                                                        <button aria-label="Increase {row.label}"><i class="up"></i></button>
                                                        <button aria-label="Decrease {row.label}"><i class="down"></i></button>
                                                    </div>
                                                {/if}
                                            </div>
                                        {/if}
                                    </div>
                                {/each}
                            {/each}
                        </div>
                        <div class="scrollbar"><i></i></div>
                    </div>
                </div>
                <div class="panel-tabs">
                    {#each panelTabs as t, i}
                        <button class:current={i == 1} aria-label={t.name}><svg viewBox="0 0 24 24">{@html t.icon}</svg></button>
                    {/each}
                </div>
            </div>
        </aside>
    </main>

    <footer class="status">
        <button aria-label="Toggle left sidebar" class="sidebar-toggle"><i class="left"></i></button>
        <div class="coords">
            <button>CPlane</button>
            <span>x -57.93</span>
            <span>y 37.83</span>
            <span>z 0</span>
            <button>Meters</button>
            <button class="layer"><i></i>CORTE</button>
        </div>
        <div class="toggles">
            {#each toggles as t}
                <button class:on={t.on}>{t.label}</button>
            {/each}
            <button class="auto"><svg viewBox="0 0 10 14"><path d="M2 6V4q0-3 3-3t3 3v2" fill="none" stroke="#777" stroke-width="1.500" /><path d="M1 6h8v7H1z" fill="#e5e5e5" /></svg>Auto CPlane (Object)</button>
            <button>Record History</button>
            <button class="on filter" aria-label="Filter">F</button>
        </div>
        <button aria-label="Toggle right sidebar" class="sidebar-toggle"><i class="right"></i></button>
    </footer>

    <div class="taskbar">
        <button class="widget" aria-label="Weather alert">
            <svg viewBox="0 0 28 30">
                <path d="M13 8q1-2 2 0l10 18q0 2-2 2H3q-2 0-2-2z" fill="#f5c816" />
                <path d="M6 20q1-6 7-6t7 6l-3-1-4 1-4-1z" fill="#55400a" />
                <path d="M13 19v6l-2 1M8 22v2M18 22v2" fill="none" stroke="#55400a" />
            </svg>
            <span>3</span>
        </button>
        <div class="apps">
            <button class="app" aria-label="Start">
                <svg viewBox="0 0 24 24"><path d="M0 0h11v11H0zM12 0h12v11H12zM0 12h11v12H0zM12 12h12v12H12z" fill="url(#win)" /></svg>
            </button>
            <label class="search">
                <svg viewBox="0 0 16 16"><circle cx="7" cy="7" r="5.500" fill="#666a74" stroke="#eee" stroke-width="1.600" /><path d="M11 11l4 4" stroke="#eee" stroke-width="2" /></svg>
                <input type="text" placeholder="Pesquisar" aria-label="Pesquisar" />
            </label>
            {#each apps as app}
                <button class="app {app.state}" aria-label={app.name}><svg viewBox="0 0 24 24">{@html app.icon}</svg></button>
            {/each}
        </div>
        <div class="tray">
            <button aria-label="Show hidden icons"><svg viewBox="0 0 16 16"><path d="M3 10l5-5 5 5" fill="none" stroke="#fff" stroke-width="1.600" /></svg></button>
            <button aria-label="OneDrive"><svg viewBox="0 0 16 16"><path d="M3 12q-3-2-1-5 2-1 3-2 3-4 7-1 3 1 2 5l-4 3z" fill="#ccc" /><circle cx="12" cy="12" r="4.500" fill="#d01828" /><path d="M10 10l4 4M14 10l-4 4" stroke="#fff" stroke-width="1.300" /></svg></button>
            <button class="network" aria-label="Network, sound and battery">
                <svg viewBox="0 0 16 16"><path d="M1 6q7-6 14 0M3 9q5-4 10 0M5 11q3-3 6 0" fill="none" stroke="#fff" stroke-width="1.400" /><circle cx="8" cy="13" r="1.500" fill="#fff" /></svg>
                <svg viewBox="0 0 16 16"><path d="M1 6h3l4-3v10l-4-3H1zM11 6l4 4M15 6l-4 4" fill="none" stroke="#fff" stroke-width="1.200" /></svg>
                <svg viewBox="0 0 16 16"><path d="M5 4h9v8H2V8" fill="none" stroke="#fff" stroke-width="1.300" /><path d="M7 6h5v4H5zM14 6h2v4h-2M3 0L0 5h2l-1 4 5-5H3z" fill="#fff" /></svg>
            </button>
            <button class="clock">
                <span class="time"><time>11:04 AM</time><time>10/30/2025</time></span>
                <svg viewBox="0 0 16 16"><path d="M8 1q-4 1-5 5v5l-2 2h13l-1-3V8H9zM6 14h4v2H6z" fill="#fff" /><path d="M11 1h4l-4 4h4M6 6h3l-3 4h3" fill="none" stroke="#fff" /><path d="M5 6h4l-4 4h4" fill="none" stroke="#222" /></svg>
            </button>
        </div>
    </div>
</div>

<style>
    :global(body) {
        background: #444;
    }
    .defs {
        position: absolute;
        width: 0;
        height: 0;
    }
    .desktop {
        display: flex;
        flex-direction: column;
        height: 100vh;
        overflow: hidden;
        background: #444;
        color: #e6e6e6;
        font: 11px/15px 'Noto Sans', 'Open Sans', sans-serif;
    }
    h1,
    h2,
    h3,
    p {
        margin: 0;
        font-size: inherit;
        font-weight: normal;
    }
    button,
    input,
    select {
        margin: 0;
        padding: 0;
        border: none;
        outline: none;
        background: none;
        color: inherit;
        font: inherit;
        box-sizing: border-box;
        border-radius: 0;
    }
    svg {
        display: block;
    }

    /* title and menu */
    .titlebar {
        display: flex;
        align-items: center;
        flex: none;
        height: 22px;
        padding-left: 2px;
        background: #323232;
    }
    .logo {
        width: 16px;
        height: 16px;
    }
    .titlebar h1 {
        flex: 1;
        padding-left: 5px;
    }
    .window-buttons {
        display: flex;
    }
    .window-buttons button {
        display: grid;
        place-items: center;
        width: 46px;
        height: 20px;
    }
    .window-buttons svg {
        width: 12px;
        height: 12px;
        fill: none;
        stroke: #8c8c8c;
    }
    .menu {
        display: flex;
        gap: 15px;
        flex: none;
        height: 21px;
        padding-left: 6px;
        background: #323232;
    }
    .menu button {
        height: 17px;
    }

    /* grip dots */
    .grip {
        display: flex;
        flex-direction: column;
        align-items: center;
        justify-content: center;
        gap: 3px;
        flex: none;
        width: 9px;
        background: #323232;
    }
    .grip i {
        width: 3px;
        height: 3px;
        border-radius: 2px;
        background: #606060;
    }
    .grip.flat {
        flex-direction: row;
        width: auto;
        height: 9px;
        border-bottom: 1px solid #444;
        border-radius: 5px 5px 0 0;
    }

    /* command area */
    .command {
        display: flex;
        flex: none;
        height: 71px;
        padding: 0 1px 3px 2px;
    }
    .command-body {
        display: flex;
        flex-direction: column;
        flex: 1;
        margin-left: 1px;
        background: #222;
    }
    .history {
        display: flex;
        flex: 1;
        min-height: 0;
        overflow: hidden;
        border-bottom: 1px solid #8c8c8c;
    }
    .lines {
        display: flex;
        flex: 1;
        flex-direction: column;
        justify-content: flex-end;
        padding-left: 1px;
        white-space: pre;
    }
    .history-scroll {
        display: flex;
        justify-content: center;
        align-items: center;
        width: 17px;
        background: #171717;
    }
    .history-scroll i {
        width: 2px;
        height: 17px;
        background: #999;
    }
    .prompt {
        display: flex;
        align-items: flex-start;
        height: 18px;
        padding-left: 1px;
    }
    .prompt label {
        font-weight: bold;
    }
    .prompt input {
        flex: 1;
    }
    .up,
    .down {
        border: 3px solid transparent;
    }
    .up {
        border-top: none;
        border-bottom-color: #ddd;
    }
    .down {
        border-bottom: none;
        border-top-color: #ddd;
    }
    .stepper {
        display: flex;
        flex-direction: column;
        flex: none;
        width: 12px;
        box-sizing: border-box;
        border-left: 1px solid #8c8c8c;
    }
    .stepper button {
        display: grid;
        place-items: center;
        flex: 1;
    }
    .stepper button + button {
        border-top: 1px solid #8c8c8c;
    }
    .stepper.framed {
        width: 14px;
        height: 17px;
        margin: 1px 1px 0 0;
        border: 1px solid #8c8c8c;
        border-radius: 2px;
        background: #333;
    }

    /* tool buttons */
    .toolbar {
        display: flex;
        flex: none;
        height: 35px;
        margin: 0 1px 0 2px;
        background: #323232;
        border-radius: 5px;
        overflow: hidden;
    }
    .tools {
        display: flex;
        align-items: flex-start;
        padding-left: 1px;
    }
    .tool {
        position: relative;
        display: grid;
        place-items: center;
        width: 28px;
        height: 28px;
    }
    .tool svg {
        width: 24px;
        height: 24px;
        filter: drop-shadow(0 0 1px #707070);
    }
    .tool.more::after {
        content: '';
        position: absolute;
        right: 0;
        bottom: 0;
        border: 2px solid transparent;
        border-right-color: #aaa;
        border-bottom-color: #aaa;
    }

    /* main split */
    main {
        display: flex;
        flex: 1;
        min-height: 0;
        padding-top: 2px;
    }
    .side {
        width: 117px;
        flex: none;
        margin-left: 2px;
        background: #323232;
        border-radius: 5px 5px 0 0;
    }
    .side-tools {
        display: grid;
        grid-template-columns: repeat(4, 28px);
    }
    .center {
        display: flex;
        flex-direction: column;
        flex: 1;
        min-width: 0;
        margin-left: 3px;
        padding-top: 1px;
    }
    .viewport {
        position: relative;
        flex: 1;
        min-height: 0;
        overflow: hidden;
        border: 1px solid #7d7f82;
        background: #9ca3ab;
    }
    .scene {
        width: 100%;
        height: 100%;
    }
    .scene line {
        stroke: #939aa2;
    }
    .scene line.major {
        stroke: #86868d;
    }
    .house > path:not([fill]) {
        fill: none;
        stroke: #0a0a0a;
        stroke-width: 5;
    }
    .house > path.thick:not([fill]) {
        stroke-width: 8;
    }
    .ghost path {
        fill: none;
        stroke: #a9a9aa;
        stroke-width: 3;
    }
    .ghost path.faint {
        stroke: #c8c8c9;
    }
    .plans path {
        fill: none;
        stroke: #111;
        stroke-width: 4;
    }
    .plans path.thick {
        stroke-width: 6;
    }
    .plans path.navy {
        stroke: #101060;
        stroke-width: 6;
    }
    .axes path {
        fill: none;
        stroke: #666;
    }
    .axes text {
        fill: #666;
        font-size: 13px;
    }
    .view-label {
        position: absolute;
        left: 0;
        top: 0;
        display: flex;
        align-items: center;
        height: 17px;
        padding-left: 7px;
        background: #0a5cff;
        color: #fff;
        font-weight: bold;
        border-radius: 0 0 3px 0;
    }
    .view-label b {
        display: grid;
        place-items: center;
        width: 10px;
        height: 15px;
        margin-left: 9px;
        border-left: 1px solid #fff;
    }
    .view-label .down {
        border-width: 4px 4px 0;
        border-top-color: #fff;
    }
    .tabs {
        display: flex;
        align-items: flex-start;
        gap: 15px;
        height: 20px;
        padding-right: 10px;
        color: #7e7e7e;
    }
    .tabs button {
        height: 20px;
    }
    .tabs .current {
        padding: 0 8px 0 9px;
        margin-right: -8px;
        border: 1px solid #8c8c8c;
        border-top: none;
        border-radius: 0 0 4px 4px;
        background: #323232;
        color: #fff;
    }
    .add svg {
        width: 9px;
        height: 9px;
    }

    /* properties */
    .properties {
        display: flex;
        flex-direction: column;
        flex: none;
        width: 384px;
        margin: 0 1px 0 3px;
        background: #323232;
        border-radius: 5px 5px 0 0;
    }
    .panel-title {
        display: flex;
        justify-content: space-between;
        align-items: center;
        height: 18px;
        padding: 0 4px 0 1px;
        border-bottom: 1px solid #444;
        color: #8c8c8c;
    }
    .panel-title svg {
        width: 12px;
        height: 12px;
    }
    .panel-body {
        display: flex;
        flex: 1;
        min-height: 0;
    }
    .panel-main {
        display: flex;
        flex-direction: column;
        flex: 1;
        min-width: 0;
    }
    .pages {
        display: flex;
        gap: 4px;
        height: 28px;
        padding: 4px 6px 13px;
    }
    .pages button {
        display: grid;
        place-items: center;
        width: 28px;
    }
    .pages .current {
        background: #44568f;
    }
    .pages svg {
        width: 24px;
        height: 24px;
    }
    .scroll-area {
        display: flex;
        flex: 1;
        min-height: 0;
        overflow: hidden;
        padding: 0 9px 0 4px;
        gap: 9px;
    }
    .form {
        flex: 1;
    }
    .form h3 {
        height: 23px;
        box-sizing: border-box;
        border-bottom: 1px solid #444;
        font-size: 13px;
        line-height: 23px;
    }
    .row {
        display: grid;
        grid-template-columns: minmax(0, 161px) 157px;
        justify-content: space-between;
        align-items: center;
        height: 20px;
        box-sizing: border-box;
        margin-left: 16px;
        padding: 1px 0;
        border-bottom: 1px solid #444;
    }
    .row.text,
    .row.select {
        height: 22px;
    }
    .row.button,
    .row.file {
        height: 26px;
    }
    .field {
        position: relative;
        display: flex;
        height: 100%;
        min-width: 0;
        background: #5b5b5b;
    }
    .field input {
        flex: 1;
        min-width: 0;
        padding-left: 4px;
    }
    .field select {
        flex: 1;
        padding-left: 4px;
        appearance: none;
    }
    .chevron {
        position: absolute;
        right: 4px;
        top: 5px;
        width: 8px;
        height: 8px;
        fill: none;
        stroke: #ddd;
        stroke-width: 1.5;
    }
    input[type='checkbox'] {
        appearance: none;
        width: 14px;
        height: 13px;
        margin-left: 1px;
        border: 1px solid #8c8c8c;
        background: #5b5b5b;
    }
    .outlined {
        height: 100%;
        border: 1px solid #8c8c8c;
        background: #323232;
    }
    .row.file input {
        border: 1px solid #8c8c8c;
        padding-left: 3px;
    }
    ::placeholder {
        color: #a8a8a8;
        opacity: 1;
    }
    .outlined.browse {
        width: 24px;
        border-left: none;
    }
    .scrollbar {
        width: 8px;
    }
    .scrollbar i {
        display: block;
        height: 89%;
        border-radius: 4px;
        background: #7a7a7a;
    }
    .panel-tabs {
        width: 20px;
        background: #444;
    }
    .panel-tabs button {
        display: grid;
        place-items: center;
        width: 20px;
        height: 36px;
    }
    .panel-tabs .current {
        background: #323232;
        border-radius: 0 5px 5px 0;
    }
    .panel-tabs svg {
        width: 14px;
        height: 14px;
    }

    /* status bar */
    .status {
        display: flex;
        align-items: center;
        flex: none;
        height: 21px;
        margin: 0 1px 3px 2px;
        padding: 0 4px 0 5px;
        background: #323232;
        color: #b8b8b8;
    }
    .sidebar-toggle {
        flex: none;
        width: 14px;
        height: 14px;
        background: #b8b8b8;
    }
    .sidebar-toggle i {
        display: block;
        width: 7px;
        height: 10px;
        margin: 2px 2px 2px auto;
        background: #222;
    }
    .sidebar-toggle .right {
        margin: 2px;
    }
    .coords {
        display: grid;
        grid-template-columns: 78px 88px 96px 82px 72px auto;
        justify-items: start;
        margin-left: 20px;
    }
    .layer {
        display: flex;
        gap: 7px;
        align-items: center;
    }
    .layer i {
        width: 14px;
        height: 14px;
        border: 1px solid #ddd;
        background: #000;
    }
    .toggles {
        display: flex;
        align-items: center;
        gap: 12px;
        margin-left: auto;
        margin-right: 3px;
        white-space: nowrap;
    }
    .toggles .on {
        height: 19px;
        padding: 0 9px;
        border-radius: 2px;
        background: #44568f;
        color: #fff;
        font-weight: bold;
    }
    .toggles .auto {
        display: flex;
        gap: 10px;
        align-items: center;
        margin-right: 16px;
    }
    .auto svg {
        width: 10px;
        height: 14px;
    }
    .toggles .filter {
        padding: 0 1px 0 7px;
    }

    /* taskbar */
    .taskbar {
        display: flex;
        align-items: center;
        flex: none;
        height: 46px;
        background: linear-gradient(90deg, #1c222e, #1d2130 60%, #23211f 78%, #1c2030 92%, #18223c);
        color: #fff;
        font-family: 'Open Sans', 'Noto Sans', sans-serif;
        font-size: 12px;
    }
    .widget {
        position: relative;
        width: 28px;
        height: 30px;
        margin: 0 252px 0 19px;
    }
    .widget svg {
        width: 28px;
        height: 30px;
    }
    .widget span {
        position: absolute;
        right: 0;
        top: -2px;
        width: 16px;
        height: 16px;
        border-radius: 8px;
        background: #ff99a4;
        color: #222;
        font-size: 11px;
        line-height: 16px;
    }
    .apps {
        display: flex;
        align-items: center;
        gap: 4px;
    }
    .app {
        position: relative;
        display: grid;
        place-items: center;
        width: 40px;
        height: 40px;
        border-radius: 4px;
    }
    .app svg {
        width: 24px;
        height: 24px;
        overflow: visible;
    }
    .app.open::after,
    .app.current::after {
        content: '';
        position: absolute;
        bottom: 1px;
        left: 17px;
        width: 6px;
        height: 3px;
        border-radius: 2px;
        background: #9a9da4;
    }
    .app.current {
        background: #2b303c;
    }
    .app.current::after {
        left: 12px;
        width: 16px;
        background: #4cc2ff;
    }
    .search {
        display: flex;
        align-items: center;
        gap: 9px;
        width: 220px;
        height: 32px;
        box-sizing: border-box;
        padding: 0 12px 0 10px;
        margin-left: 1px;
        border: 1px solid #4b4e58;
        border-radius: 16px;
        background: #3a3d48;
        font-size: 13px;
    }
    .search svg {
        width: 16px;
        height: 16px;
    }
    .search input {
        min-width: 0;
        flex: 1;
    }
    .search input::placeholder {
        color: #d0d0d4;
    }
    .tray {
        display: flex;
        align-items: center;
        gap: 16px;
        margin-left: auto;
        padding-right: 18px;
    }
    .tray svg {
        width: 16px;
        height: 16px;
    }
    .network,
    .clock {
        display: flex;
        align-items: center;
        gap: 8px;
    }
    .time {
        display: flex;
        flex-direction: column;
        align-items: flex-end;
        line-height: 16px;
    }
</style>
